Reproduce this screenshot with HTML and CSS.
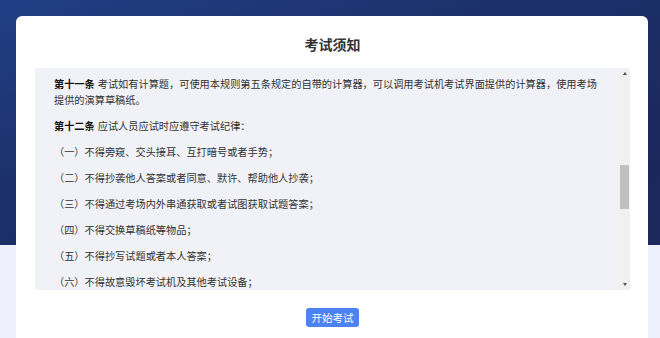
FILE: index.html
```html
<!DOCTYPE html>
<html>

<head>
    <title>考试须知</title>
    <link rel="stylesheet" href="styles.css">
</head>

<body>
    <div class="modal">
        <h2 class="modal-title">考试须知</h2>

        <!-- Rules, shown scrolled part way -->
        <div class="notice">
            <div class="notice-text">
                <p><b>第十一条</b>考试如有计算题，可使用本规则第五条规定的自带的计算器，可以调用考试机考试界面提供的计算器，使用考场提供的演算草稿纸。</p>
                <p><b>第十二条</b>应试人员应试时应遵守考试纪律：</p>
                <p>（一）不得旁窥、交头接耳、互打暗号或者手势；</p>
                <p>（二）不得抄袭他人答案或者同意、默许、帮助他人抄袭；</p>
                <p>（三）不得通过考场内外串通获取或者试图获取试题答案；</p>
                <p>（四）不得交换草稿纸等物品；</p>
                <p>（五）不得抄写试题或者本人答案；</p>
                <p>（六）不得故意毁坏考试机及其他考试设备；</p>
            </div>
            <div class="scrollbar">
                <span class="arrow up"></span>
                <div class="track">
                    <div class="thumb"></div>
                </div>
                <span class="arrow down"></span>
            </div>
        </div>

        <div class="actions">
            <button type="button" class="button">开始考试</button>
        </div>
    </div>
</body>

</html>
```

FILE: styles.css
```css
* {
    margin: 0;
    padding: 0;
    box-sizing: border-box;
}

html,
body {
    height: 100%;
    overflow: hidden;
}

body {
    font-family: 'Noto Sans CJK SC', 'Noto Sans', sans-serif;
    color: #303133;
    background:
        linear-gradient(to bottom, transparent 0, transparent 245px, #edf0fb 245px),
        linear-gradient(160deg, #203f85 0%, #1c3069 35%, #1b275b 70%, #1f285a 100%);
    padding: 16px 12px 0 16px;
}

.modal {
    height: 322px;
    background: #ffffff;
    border-radius: 6px 6px 0 0;
    padding: 20px 18px 0 19px;
    display: flex;
    flex-direction: column;
}

.modal-title {
    font-size: 14px;
    font-weight: 700;
    line-height: 16px;
    text-align: center;
    color: #303133;
    margin-bottom: 16px;
}

.notice {
    height: 222px;
    background: #f1f2f7;
    display: flex;
}

.notice-text {
    flex: 1;
    overflow: hidden;
    padding: 8px 19px 0 19px;
    font-size: 10.2px;
    line-height: 16px;
    color: #333333;
}

.notice-text p {
    margin-bottom: 10px;
}

.notice-text b {
    color: #111111;
    font-weight: 700;
    margin-right: 3px;
}

.scrollbar {
    width: 11px;
    background: #f1f1f1;
    display: flex;
    flex-direction: column;
    align-items: center;
}

.arrow {
    width: 0;
    height: 0;
    border-left: 2.5px solid transparent;
    border-right: 2.5px solid transparent;
}

.arrow.up {
    margin: 4px 0 5px;
    border-bottom: 3px solid #505050;
}

.arrow.down {
    margin: 5px 0 4px;
    border-top: 3px solid #505050;
}

.track {
    flex: 1;
    width: 100%;
    display: flex;
    justify-content: center;
}

.thumb {
    width: 9px;
    height: 44px;
    margin-top: 85px;
    background: #c1c1c1;
}

.actions {
    display: flex;
    justify-content: center;
    padding-top: 18px;
}

.button {
    width: 53px;
    height: 19px;
    background: #4d82f3;
    color: #ffffff;
    border: none;
    border-radius: 3px;
    font-family: 'Noto Sans CJK SC', sans-serif;
    font-size: 10.5px;
    line-height: 19px;
    cursor: pointer;
}
```
